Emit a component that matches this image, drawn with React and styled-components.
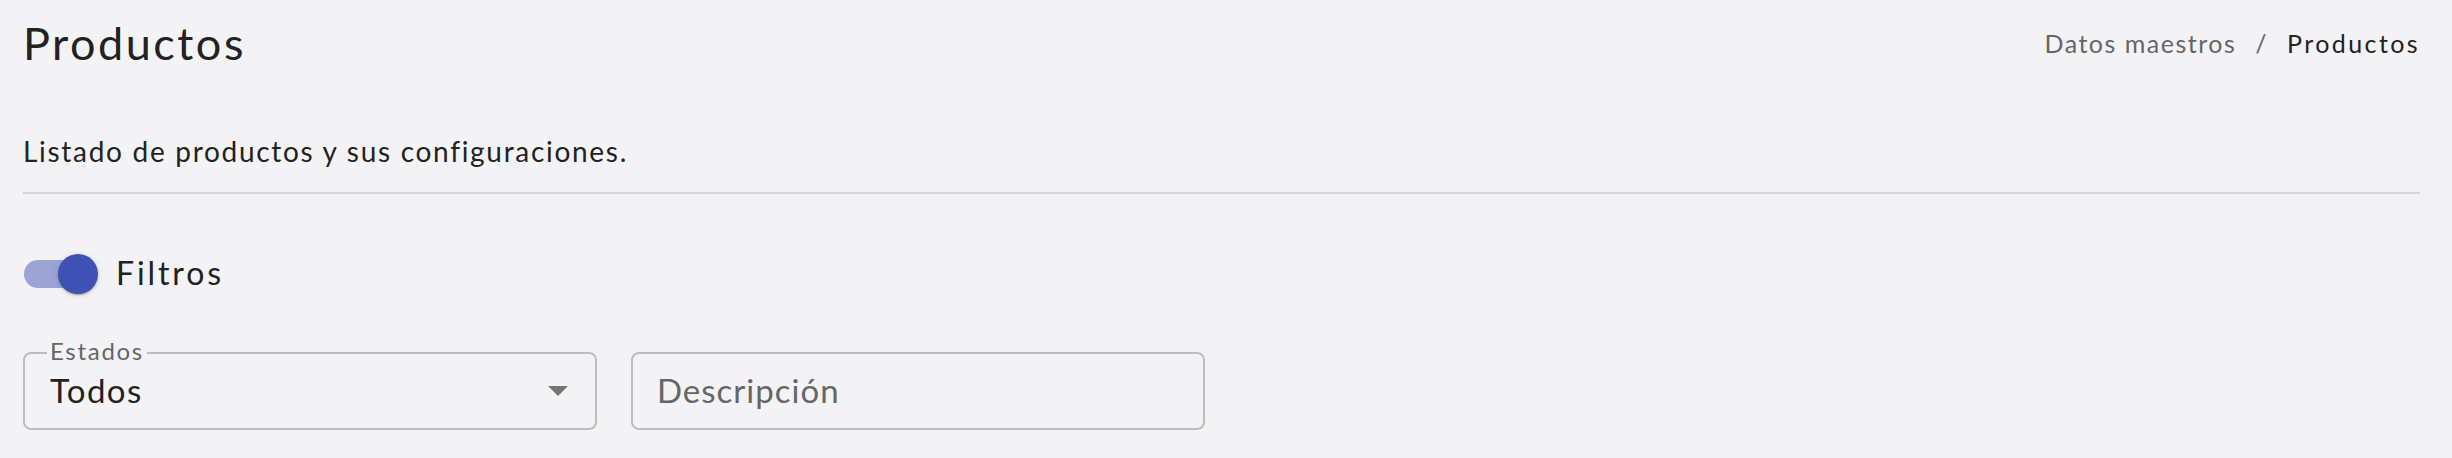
import React from 'react'
import styled, { createGlobalStyle } from 'styled-components'

const GlobalStyle = createGlobalStyle`
  body {
    margin: 0;
    background-color: #f3f3f5;
    font-family: "Lato", "Open Sans", sans-serif;
    color: #222;
  }
`;

const Page = styled.div`
  padding: 16px 32px 0 23px;
`;

const Header = styled.div`
  display: flex;
  justify-content: space-between;
  align-items: center;
`;

const Title = styled.h1`
  margin: 0;
  font-size: 45px;
  font-weight: 400;
  line-height: 1.2;
  letter-spacing: 2.5px;
  color: #222;
`;

const Breadcrumbs = styled.nav`
  display: flex;
  align-items: center;
  gap: 19px;
  font-size: 25px;
  line-height: 1.2;
`;

const Crumb = styled.span`
  color: ${p => (p.$current ? '#222' : '#666')};
  letter-spacing: ${p => (p.$current ? '2.4px' : '1.5px')};
`;

const Subtitle = styled.p`
  margin: 65px 0 0;
  font-size: 28px;
  line-height: 1.2;
  letter-spacing: 1.7px;
  color: #222;
`;

const Divider = styled.hr`
  margin: 23px 0 0;
  border: none;
  border-top: 2px solid #d5d5d7;
`;

const FilterToggle = styled.label`
  display: flex;
  align-items: center;
  margin: 42px 0 0 -23px;
  cursor: pointer;
`;

const SwitchRoot = styled.span`
  position: relative;
  display: inline-flex;
  width: 116px;
  height: 76px;
  padding: 24px;
  box-sizing: border-box;
`;

const Track = styled.span`
  width: 68px;
  height: 28px;
  border-radius: 14px;
  background-color: #9ca4d6;
`;

const Thumb = styled.span`
  position: absolute;
  top: 18px;
  left: 58px;
  width: 40px;
  height: 40px;
  border-radius: 50%;
  background-color: #3f51b5;
  box-shadow: 0 2px 2px -1px rgba(0, 0, 0, 0.2), 0 1px 2px 0 rgba(0, 0, 0, 0.14), 0 1px 6px 0 rgba(0, 0, 0, 0.12);
`;

const ToggleText = styled.span`
  font-size: 32px;
  line-height: 1.2;
  letter-spacing: 2.9px;
  color: #222;
`;

const Fields = styled.div`
  display: grid;
  grid-template-columns: 574px 574px;
  gap: 34px;
  margin-top: 40px;
`;

const Field = styled.div`
  position: relative;
  display: flex;
  align-items: center;
  justify-content: space-between;
  height: 78px;
  box-sizing: border-box;
  padding: 0 27px 0 ${p => p.$inset}px;
  border: 2px solid #bdbdbf;
  border-radius: 8px;
`;

const FloatingLabel = styled.span`
  position: absolute;
  top: -17px;
  left: 22px;
  padding: 0 3px;
  background-color: #f3f3f5;
  font-size: 24px;
  line-height: 1.2;
  letter-spacing: 1.7px;
  color: #666;
`;

const Value = styled.span`
  font-size: 33px;
  line-height: 1.2;
  letter-spacing: 1.4px;
  color: #222;
`;

const TextInput = styled.input`
  flex: 1;
  border: none;
  outline: none;
  background: transparent;
  padding: 0;
  font-family: "Lato", "Open Sans", sans-serif;
  font-size: 33px;
  line-height: 1.2;
  letter-spacing: 1px;
  color: #222;

  &::placeholder {
    color: #666;
    opacity: 1;
  }
`;

const ArrowIcon = () => (
  <svg width="20" height="10" viewBox="0 0 20 10">
    <path d="M0 0 L20 0 L10 10 Z" fill="#757575" />
  </svg>
);

export default function App() {
  return (
    <Page>
      <GlobalStyle />
      <Header>
        <Title>Productos</Title>
        <Breadcrumbs>
          <Crumb>Datos maestros</Crumb>
          <Crumb>/</Crumb>
          <Crumb $current>Productos</Crumb>
        </Breadcrumbs>
      </Header>
      <Subtitle>Listado de productos y sus configuraciones.</Subtitle>
      <Divider />
      <FilterToggle>
        <SwitchRoot>
          <Track />
          <Thumb />
        </SwitchRoot>
        <ToggleText>Filtros</ToggleText>
      </FilterToggle>
      <Fields>
        <Field $inset={25}>
          <FloatingLabel>Estados</FloatingLabel>
          <Value>Todos</Value>
          <ArrowIcon />
        </Field>
        <Field $inset={24}>
          <TextInput placeholder="Descripción" />
        </Field>
      </Fields>
    </Page>
  )
}
